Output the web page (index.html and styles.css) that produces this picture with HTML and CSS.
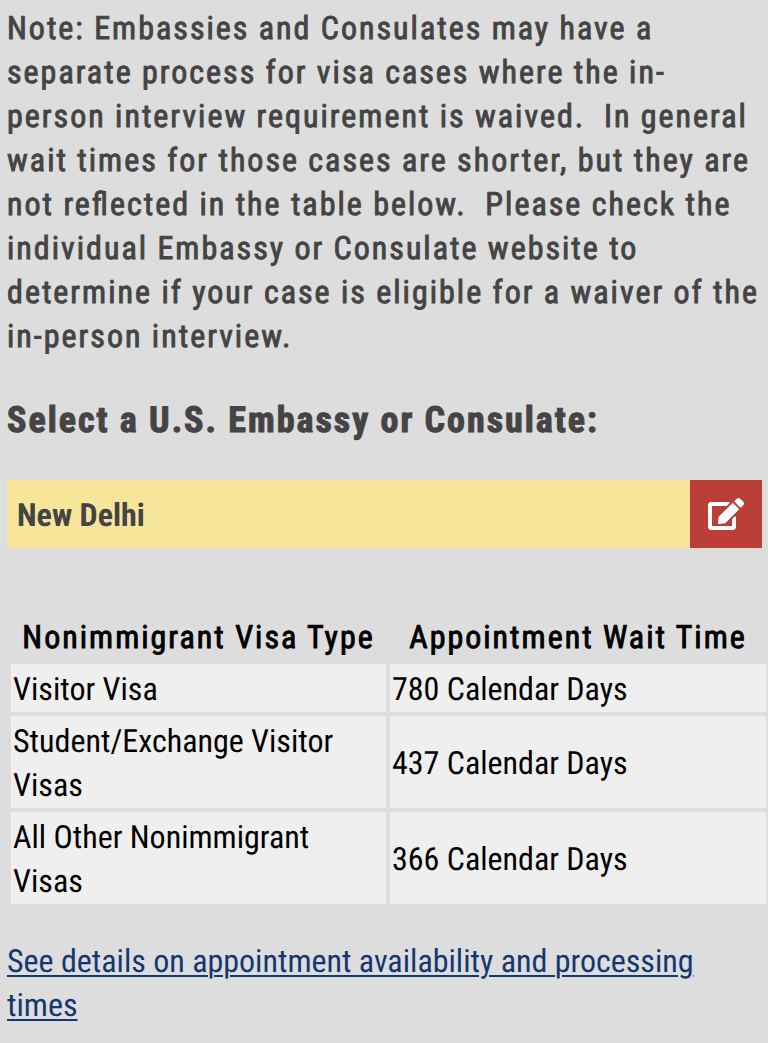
FILE: index.html
```html
<!DOCTYPE html>
<html lang="en">
<head>
    <meta charset="UTF-8">
    <meta name="viewport" content="width=device-width, initial-scale=1.0">
    <title>Visa Appointment Wait Times</title>
    <link rel="stylesheet" href="styles.css">
</head>
<body>
    <p class="note">
        Note: Embassies and Consulates may have a<br>
        separate process for visa cases where the in-<br>
        person interview requirement is waived.&nbsp; In general<br>
        wait times for those cases are shorter, but they are<br>
        not reflected in the table below.&nbsp; Please check the<br>
        individual Embassy or Consulate website to<br>
        determine if your case is eligible for a waiver of the<br>
        in-person interview.
    </p>

    <h2 class="select-title">Select a U.S. Embassy or Consulate:</h2>

    <!-- Selected post -->
    <div class="post-picker">
        <span class="post-name">New Delhi</span>
        <button class="edit-btn" type="button" aria-label="Edit">
            <svg viewBox="0 0 576 512" width="36" height="32">
                <path fill="#fff" d="M402.600 83.200l90.200 90.200c3.800 3.800 3.800 10 0 13.800L274.400 405.600l-92.800 10.300c-12.400 1.400-22.900-9.100-21.500-21.500l10.300-92.800L388.800 83.200c3.800-3.800 10-3.800 13.800 0zm162-22.900l-48.800-48.800c-15.200-15.200-39.900-15.200-55.200 0l-35.400 35.400c-3.800 3.800-3.800 10 0 13.800l90.200 90.200c3.800 3.800 10 3.800 13.800 0l35.400-35.400c15.200-15.300 15.200-40 0-55.200zM384 346.200V448H64V128h229.800c3.200 0 6.200-1.300 8.500-3.500l40-40c7.600-7.600 2.200-20.500-8.500-20.500H48C21.500 64 0 85.500 0 112v352c0 26.500 21.500 48 48 48h352c26.500 0 48-21.500 48-48V306.200c0-10.700-12.900-16-20.500-8.500l-40 40c-2.200 2.300-3.500 5.300-3.500 8.500z"/>
            </svg>
        </button>
    </div>

    <!-- Wait times -->
    <table class="wait-table">
        <thead>
            <tr>
                <th class="type-col">Nonimmigrant Visa Type</th>
                <th>Appointment Wait Time</th>
            </tr>
        </thead>
        <tbody>
            <tr>
                <td>Visitor Visa</td>
                <td>780 Calendar Days</td>
            </tr>
            <tr>
                <td>Student/Exchange Visitor<br>Visas</td>
                <td>437 Calendar Days</td>
            </tr>
            <tr>
                <td>All Other Nonimmigrant<br>Visas</td>
                <td>366 Calendar Days</td>
            </tr>
        </tbody>
    </table>

    <a class="details-link" href="#">See details on appointment availability and processing<br>times</a>
</body>
</html>
```

FILE: styles.css
```css
body {
    margin: 0;
    padding: 6px 0 0 7px;
    background-color: #dddddd;
    font-family: Roboto, "Liberation Sans", sans-serif;
    font-stretch: 75%;
    font-size: 32px;
    line-height: 44px;
    color: #000;
    overflow: hidden;
    text-rendering: geometricPrecision;
}
.note {
    margin: 0;
    color: #444;
    font-weight: 400;
    letter-spacing: 2px;
    -webkit-text-stroke: 0.9px #444;
    font-feature-settings: "liga" 1;
    white-space: nowrap;
}
.select-title {
    margin: 40px 0 38px;
    font-size: 36px;
    line-height: 44px;
    font-weight: 700;
    letter-spacing: 2px;
    -webkit-text-stroke: 1px #444;
    color: #444;
}
.post-picker {
    display: flex;
    width: 755px;
    height: 68px;
    background-color: #f7e69a;
}
.post-name {
    flex: 1;
    padding-left: 10px;
    line-height: 70px;
    font-weight: 700;
    color: #444;
}
.edit-btn {
    display: flex;
    align-items: center;
    justify-content: center;
    width: 72px;
    padding: 0;
    border: 0;
    background-color: #bb3e38;
}
.wait-table {
    width: 763px;
    margin-top: 60px;
    border-spacing: 4px;
    table-layout: fixed;
    white-space: nowrap;
}
.type-col {
    width: 371px;
}
th {
    padding: 3px 2px 1px;
    font-weight: 400;
    letter-spacing: 2px;
    -webkit-text-stroke: 0.9px #000;
}
td {
    padding: 3px 2px 1px;
    background-color: #efefef;
}
.details-link {
    display: block;
    margin-top: 31px;
    color: #14376f;
    text-decoration-thickness: 2px;
    text-underline-offset: 3px;
    white-space: nowrap;
}
```
